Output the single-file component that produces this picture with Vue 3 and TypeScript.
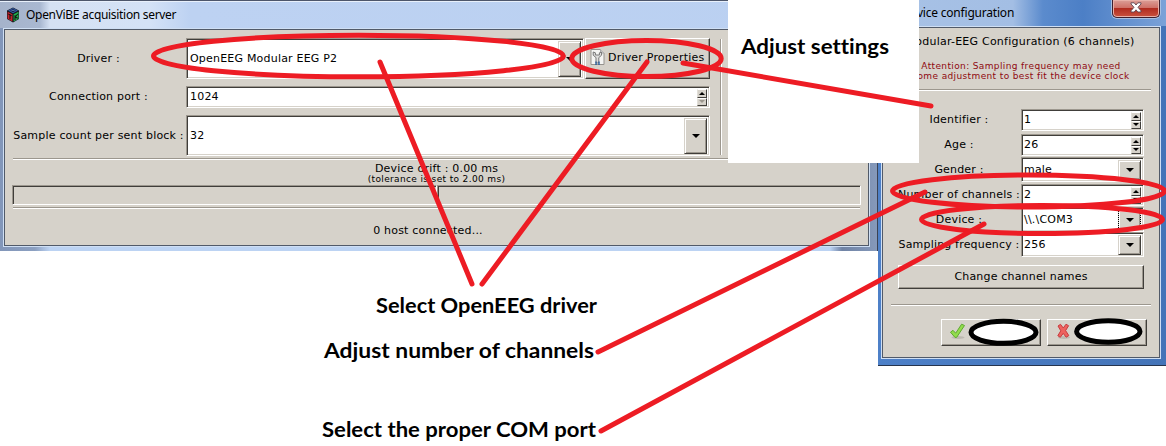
<script setup lang="ts">
interface Field {
  label: string
  value: string
  kind: 'spin' | 'combo'
  focused?: boolean
}

const fields: Field[] = [
  { label: 'Identifier :', value: '1', kind: 'spin' },
  { label: 'Age :', value: '26', kind: 'spin' },
  { label: 'Gender :', value: 'male', kind: 'combo' },
  { label: 'Number of channels :', value: '2', kind: 'spin' },
  { label: 'Device :', value: '\\\\.\\COM3', kind: 'combo', focused: true },
  { label: 'Sampling frequency :', value: '256', kind: 'combo' },
]
</script>

<template>
  <div class="stage">
    <section class="window server">
      <header class="titlebar">
        <svg class="app-icon" width="14" height="16" viewBox="0 0 14 16">
          <path d="M7 .5 13 3.5V12L7 15.5 1 12V3.5Z" fill="#17191f" />
          <path d="M7 1 12 3.6 7 6.3 2 3.6Z" fill="#315aa8" />
          <path d="M1.6 4.8 6.4 7.3V14.6L1.6 11.8Z" fill="#c8222c" />
          <path d="M12.5 4.8 7.6 7.3V14.6L12.5 11.8Z" fill="#20b04b" />
          <path d="M2.4 7.1 5.6 8.8M4 8.2V12.3M9 8.2V13M11.8 7 9.2 10 11.8 11.2" stroke="#151515" stroke-width="1.1" fill="none" />
          <path d="M5 3.6C5 2.5 9 2.5 9 3.6S5 4.8 5 3.6" stroke="#10183a" fill="#7eb1ed" />
        </svg>
        <span class="title">OpenViBE acquisition server</span>
      </header>
      <div class="client">
        <div class="form-area">
          <div class="form">
            <label>Driver :</label>
            <div class="driver-row">
              <div class="field tall"><span class="value">OpenEEG Modular EEG P2</span><i class="drop"><b class="caret"></b></i></div>
              <div class="button props">
                <svg width="15" height="17" viewBox="0 0 15 17">
                  <path d="M1 .5H10.5L14 4V15.5H1Z" fill="#f4f4f2" stroke="#96938e" />
                  <path d="M10.5 .5V4H14" fill="#ddd" stroke="#aaa" />
                  <path d="M3.2 3V6.2L6 8.6V14H8.8V8.6L11.6 6.2V3L9.4 3.8V6H5.4V3.8Z" fill="#dededc" stroke="#777" />
                  <path d="M6 12.5V16M9 12.5V16" stroke="#235a9e" stroke-width="1.3" />
                </svg>
                <span>Driver Properties</span>
              </div>
            </div>
            <label>Connection port :</label>
            <div class="field short"><span class="value">1024</span><i class="spinner"><b class="up"></b><b class="down off"></b></i></div>
            <label>Sample count per sent block :</label>
            <div class="field tall"><span class="value">32</span><i class="drop"><b class="caret"></b></i></div>
          </div>
          <div class="vrule"></div>
        </div>
        <div class="rule"></div>
        <div class="drift">Device drift : 0.00 ms</div>
        <div class="tolerance">(tolerance is set to 2.00 ms)</div>
        <div class="bars"><div class="bar"></div><div class="bar"></div></div>
        <div class="rule"></div>
        <div class="hosts">0 host connected...</div>
      </div>
    </section>

    <section class="window config">
      <header class="titlebar">
        <span class="title">Device configuration</span>
        <span class="close">
          <svg width="12" height="11" viewBox="0 0 12 11">
            <path d="M1 .8H4.2L6 3 7.8.8H11V2L8 5.3 11 8.8V10H7.8L6 7.8 4.2 10H1V8.8L4 5.3 1 2Z" fill="#fff" stroke="#5c4450" stroke-width=".9" />
          </svg>
        </span>
      </header>
      <div class="client">
        <div class="heading">Modular-EEG Configuration (6 channels)</div>
        <div class="warning"><span class="w1">Attention: Sampling frequency may need</span><span class="w2">some adjustment to best fit the device clock</span></div>
        <div class="rule"></div>
        <div class="rows">
          <div v-for="f in fields" :key="f.label" class="row">
            <label>{{ f.label }}</label>
            <div class="field" :class="f.kind">
              <span class="value">{{ f.value }}</span>
              <i v-if="f.kind === 'spin'" class="spinner"><b class="up"></b><b class="down"></b></i>
              <i v-else class="drop" :class="{ focused: f.focused }"><b class="caret"></b></i>
            </div>
          </div>
        </div>
        <div class="button names">Change channel names</div>
        <div class="rule"></div>
        <div class="actions">
          <div class="button">
            <svg width="17" height="17" viewBox="0 0 17 17">
              <ellipse cx="9" cy="14.5" rx="6.5" ry="1.5" fill="#bcb8b0" />
              <path d="M1.5 9.2 4 7.3 6.7 10.2 12.6 1.2 15.5 2.5 7.6 14.4H6Z" fill="#92dc4c" stroke="#5faa31" stroke-linejoin="round" />
            </svg>
          </div>
          <div class="button">
            <svg width="17" height="17" viewBox="0 0 17 17">
              <ellipse cx="9" cy="14.5" rx="6" ry="1.5" fill="#bcb8b0" />
              <path d="M3 3 5.5 1.3 8.3 5 11 1.2 13.6 2.7 10.6 7.6 13.8 12.6 11.2 14.2 8.2 10.4 5.3 14.3 2.8 12.7 5.8 7.8Z" fill="#ed625e" stroke="#c83a3e" stroke-linejoin="round" />
            </svg>
          </div>
        </div>
      </div>
    </section>

    <svg class="notes" width="1166" height="446" viewBox="0 0 1166 446">
      <rect x="728" y="0" width="191" height="163" fill="#fff" />
      <g fill="#fff" stroke="#000" stroke-width="5">
        <ellipse cx="1003.5" cy="332.3" rx="32.5" ry="11" />
        <ellipse cx="1108.3" cy="331.5" rx="31.7" ry="10.7" />
      </g>
      <g fill="none" stroke="#ed1c24" stroke-width="5" stroke-linecap="round">
        <ellipse cx="358.5" cy="56" rx="205" ry="20.8" />
        <ellipse cx="646.5" cy="58.5" rx="74.7" ry="18" />
        <ellipse cx="1028.5" cy="191" rx="136" ry="16" />
        <ellipse cx="1042" cy="219.5" rx="120.5" ry="14" />
        <path d="M380 62 472 284M647 62 482 284M683 63 931 106M598 352 925 192M601 431 984 224" />
      </g>
      <g class="captions">
        <text x="741" y="54" textLength="148" lengthAdjust="spacingAndGlyphs">Adjust settings</text>
        <text x="376" y="313" textLength="221" lengthAdjust="spacingAndGlyphs">Select OpenEEG driver</text>
        <text x="324" y="358" textLength="270" lengthAdjust="spacingAndGlyphs">Adjust number of channels</text>
        <text x="322" y="437" textLength="274" lengthAdjust="spacingAndGlyphs">Select the proper COM port</text>
      </g>
    </svg>
  </div>
</template>

<style>
body { margin: 0; background: #fff; overflow: hidden; }
</style>

<style scoped>
* { box-sizing: border-box; }
.stage { position: relative; width: 1166px; height: 446px; overflow: hidden; background: #fff; font: 11px/13px "DejaVu Sans", sans-serif; color: #000; }
.stage span, .stage label, .stage div { white-space: nowrap; }
.window { position: absolute; display: flex; flex-direction: column; }
.server { left: 0; top: 0; width: 878px; height: 251px; padding: 0 8px 5px 4px; border-top: 1px solid #4d566b; border-right: 1px solid #3b4354; background: linear-gradient(90deg, #8296b9 0, #8ca0c1 35px, #bcd3f3 50px, #bcd3f3 830px, #7083a5 842px, #8599ba 100%); }
.server .titlebar { height: 27px; margin: 0 -7px 0 -4px; padding: 0 0 0 6px; background: linear-gradient(90deg, #a5b3cb 0, #a9b8d1 40px, #d5e1f3 50px, #d4e2f6 150px, #bdd2f2 190px, #bad0f1 100%); border-top: 1px solid #e8f0fb; }
.titlebar { display: flex; align-items: center; flex: none; font: 12px/16px "Noto Sans", "Open Sans", sans-serif; }
.app-icon { margin-right: 6px; }
.server .title { letter-spacing: -.31px; }
.client { flex: 1; min-height: 0; background: #d6d2ca; border: 1px solid #515a69; box-shadow: 0 0 0 1px #cfdff4; display: flex; flex-direction: column; }
.server .client { padding: 8px 8px 0; margin-top: 1px; }
.form-area { display: flex; height: 120px; gap: 10px; }
.form { display: grid; grid-template-columns: 173px 524px; grid-template-rows: 41px 22px 41px; row-gap: 7px; }
label { align-self: center; text-align: center; letter-spacing: .2px; }
.form label { padding: 0 2px 1px 0; }
.driver-row { display: flex; gap: 1px; }
.driver-row .field { width: 398px; flex: none; }
.field { display: flex; align-items: stretch; background: #fff; border: 1px solid; border-color: #9c978e #fff #fff #9c978e; box-shadow: inset 1px 1px #403e3a, inset -1px -1px #d6d2ca; padding: 1px 2px 1px 2px; }
.value { flex: 1; align-self: center; padding: 0 0 1px 1px; letter-spacing: .2px; }
.drop { flex: none; width: 23px; display: flex; align-items: center; justify-content: center; background: #d6d2ca; border: 1px solid; border-color: #d6d2ca #403e3a #403e3a #d6d2ca; box-shadow: inset 1px 1px #fff, inset -1px -1px #9c978e; margin-top: 1px; }
.caret { border: 4px solid transparent; border-top: 4px solid #000; border-bottom: 0; }
.button { background: #d6d2ca; border: 1px solid; border-color: #fff #403e3a #403e3a #fff; box-shadow: inset -1px -1px #9c978e; display: flex; align-items: center; }
.props { width: 125px; flex: none; padding: 0 0 2px 4px; gap: 3px; letter-spacing: .2px; }
.spinner { display: flex; flex-direction: column; width: 10px; gap: 0; flex: none; margin-top: 1px; }
.spinner b { flex: 1; display: flex; align-items: center; justify-content: center; background: #d6d2ca; border: 1px solid; border-color: #fff #403e3a #403e3a #e2dfd8; }
.spinner b::after { content: ""; border: 3px solid transparent; }
.spinner .up::after { border-top: 0; border-bottom: 3px solid #000; }
.spinner .down::after { border-bottom: 0; border-top: 3px solid #000; }
.spinner .off::after { border-top-color: #9c978e; }
.vrule { width: 2px; height: 116px; margin-top: 1px; border-left: 1px solid #9c978e; border-right: 1px solid #fff; }
.rule { flex: none; height: 2px; border-top: 1px solid #9c978e; border-bottom: 1px solid #fff; }
.drift { text-align: center; margin-top: 2px; letter-spacing: .2px; }
.tolerance { text-align: center; font-size: 9px; line-height: 9px; letter-spacing: .36px; margin-bottom: 1px; }
.bars { display: flex; height: 20px; margin: 0 -1px 2px; }
.bar { flex: 1; border: 1px solid; border-color: #9c978e #fff #fff #9c978e; box-shadow: inset 1px 1px #403e3a; }
.hosts { text-align: center; margin-top: 15px; padding-right: 17px; letter-spacing: .2px; }

.config { left: 878px; top: 0; width: 288px; height: 366px; padding: 0 6px 7px 4px; border-bottom: 1px solid #26344d; background: linear-gradient(90deg, #4d80c8, #4474b8); }
.config .titlebar { height: 26px; margin: 0 -6px 0 -4px; padding-left: 24px; background: linear-gradient(90deg, #a8c2e6 0, #a3bee4 135px, #5b8bcd 165px, #4c7fc6 205px, #7ba2d8 100%); position: relative; }
.config .title { letter-spacing: -.2px; }
.close { position: absolute; right: 6px; top: 0; width: 48px; height: 18px; display: flex; align-items: center; justify-content: center; border: 1px solid #3e1f2e; border-top: 0; border-radius: 0 0 5px 5px; background: linear-gradient(#dc9f98 0, #cf7168 45%, #b12c20 50%, #c9523f 100%); box-shadow: inset 0 0 0 1px #e8b0a8, 0 0 0 1px #a7c0e2; }
.close svg { margin-bottom: 2px; }
.config .client { margin-top: 1px; padding: 7px 8px 0; }
.heading { text-align: center; letter-spacing: .23px; padding-right: 2px; }
.warning { display: flex; flex-direction: column; align-items: center; font-size: 9px; line-height: 10px; color: #8f0810; margin: 13px 0 7px; letter-spacing: .37px; height: 21px; flex: none; }
.rows { margin: 18px 7px 0; }
.row { display: grid; grid-template-columns: 123px 123px; height: 25px; align-items: start; }
.row label { line-height: 21px; align-self: start; padding-right: 1px; letter-spacing: .18px; }
.row .field { height: 22px; }
.row .combo { height: 25px; margin-top: -2px; }
.row .value { padding: 0 0 2px; }
.row .combo .value { padding-bottom: 1px; }
.drop.focused { border-left: 1px dotted #000; border-right: 1px dotted #000; }
.names { justify-content: center; height: 24px; margin: 6px 7px 15px; letter-spacing: .18px; flex: none; padding-bottom: 1px; }
.actions { display: flex; gap: 6px; margin: 13px 4px 0 auto; }
.actions .button { width: 100px; height: 27px; padding: 0 0 2px 7px; }

.notes { position: absolute; inset: 0; }
.captions { font: bold 20px Lato, sans-serif; fill: #000; font-variant-ligatures: none; }
</style>
